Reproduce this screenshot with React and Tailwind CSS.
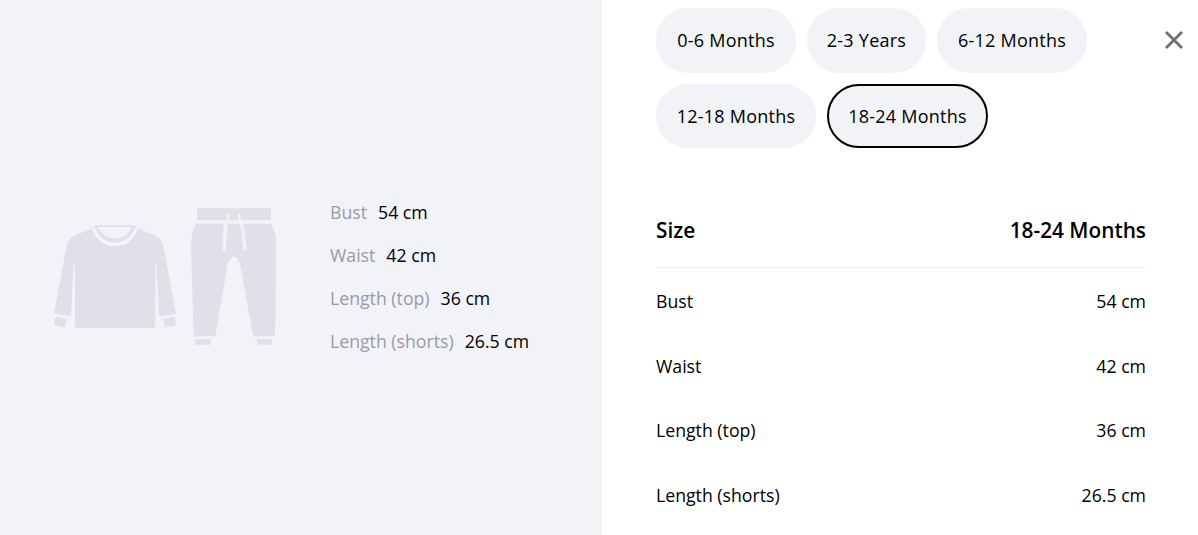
const FONT = "font-['Open_Sans','Noto_Sans',sans-serif]";

function Clothes() {
  return (
    <svg viewBox="0 0 750 510" className="w-[250px] h-[170px] shrink-0" aria-hidden="true">
      <g fill="#dfe0e8">
        <path d="M168 103H282L290 112L345 133Q365 142 370 165L408 368L357 376L350 222L346 222V402Q346 411 337 411H114Q105 411 105 402V222H100L93 376L42 368L80 165Q85 142 105 133L160 112Z" />
        <path d="M47 377L81 384L75 409L42 402Z" />
        <path d="M403 377L369 384L375 409L408 402Z" />
        <path d="M471 52H693V88H471Z" />
        <path d="M470 98H551L547 180H557L563 98H602L610 178H620L610 98H692Q708 120 709 160L705 432Q705 436 700 436H640L600 220Q592 197 581 197Q570 197 563 220L526 436H461L453 160Q454 120 470 98Z" />
        <path d="M466 444H513V461H466Z" />
        <path d="M651 444H696V461H651Z" />
      </g>
      <path d="M174 108H276Q262 142 225 142Q188 142 174 108Z" fill="#f1f3f7" />
      <path d="M161 112Q180 160 225 160Q270 160 289 112" fill="none" stroke="#f5f6f9" strokeWidth="10" />
      <path d="M566 68L558 110M597 68L604 110" fill="none" stroke="#f1f3f7" strokeWidth="7" />
    </svg>
  );
}

const specs = [
  ["Bust", "54 cm"],
  ["Waist", "42 cm"],
  ["Length (top)", "36 cm"],
  ["Length (shorts)", "26.5 cm"],
];

function Pill({ label, active, w, h }) {
  return (
    <button className={`rounded-[32px] bg-[#f1f3f7] text-black text-[18px] tracking-[0.25px] flex items-center justify-center ${h} ${w} ${active ? "border-2 border-black" : ""}`}>
      {label}
    </button>
  );
}

export default function App() {
  return (
    <div className={`${FONT} w-[1198px] h-[535px] overflow-hidden flex bg-white text-black`}>
      <div className="w-[602px] h-full bg-[#f1f3f7] flex items-center pt-[17px] pl-[40px]">
        <Clothes />
        <div className="ml-[40px] flex flex-col gap-[19px] text-[17.7px] leading-[24px]">
          {specs.map(([k, v]) => (
            <div key={k} className="flex gap-[11px]">
              <span className="text-[#9a9aa8]">{k}</span>
              <span>{v}</span>
            </div>
          ))}
        </div>
      </div>
      <div className="relative flex-1 pl-[54px] pr-[52px] pt-[8px]">
        <div className="flex flex-col gap-[11px]">
          <div className="flex gap-[11px]">
            <Pill label="0-6 Months" w="w-[140px]" h="h-[65px]" />
            <Pill label="2-3 Years" w="w-[119px]" h="h-[65px]" />
            <Pill label="6-12 Months" w="w-[150px]" h="h-[65px]" />
          </div>
          <div className="flex gap-[11px]">
            <Pill label="12-18 Months" w="w-[160px]" h="h-[64px]" />
            <Pill label="18-24 Months" w="w-[161px]" h="h-[64px]" active />
          </div>
        </div>
        <button className="absolute top-[30px] left-[562px] text-[#6f6f6f]" aria-label="Close">
          <svg viewBox="0 0 20 20" className="w-[20px] h-[20px]" fill="none" stroke="currentColor" strokeWidth="2.8">
            <path d="M2 2L18 18M18 2L2 18" />
          </svg>
        </button>
        <div className="mt-[68px] flex justify-between pb-[22px] border-b border-[#f1f3f7] text-[20.8px] font-semibold leading-[29px]">
          <span>Size</span>
          <span>18-24 Months</span>
        </div>
        <div className="flex flex-col gap-[40.5px] mt-[21px] text-[17.7px] leading-[24px]">
          {specs.map(([k, v]) => (
            <div key={k} className="flex justify-between">
              <span>{k}</span>
              <span>{v}</span>
            </div>
          ))}
        </div>
      </div>
    </div>
  );
}
